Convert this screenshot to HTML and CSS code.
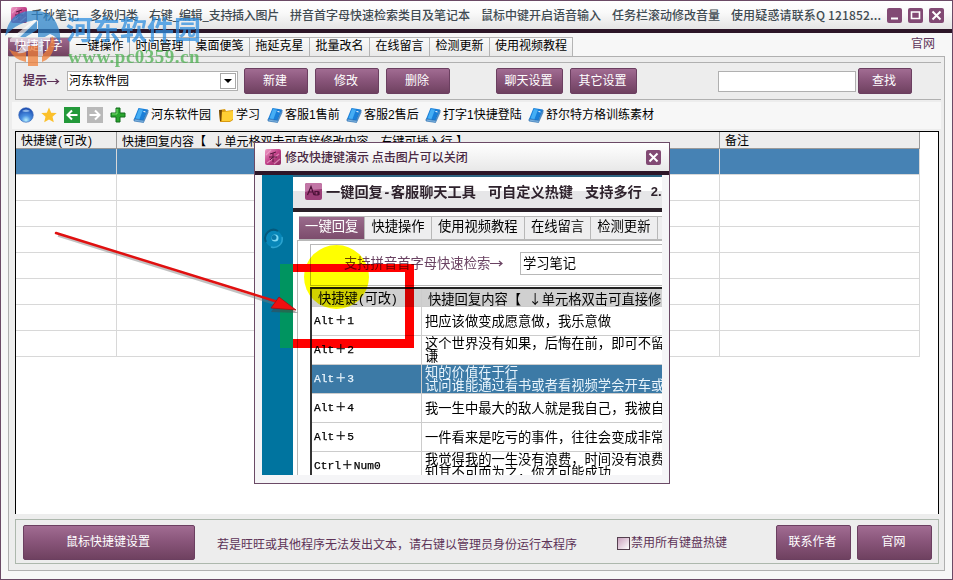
FILE: index.html
```
<!DOCTYPE html>
<html lang="zh-CN">
<head>
  <meta charset="UTF-8">
  <title>千秋笔记</title>
  <link rel="stylesheet" href="styles.css">
</head>
<body>
  <svg width="0" height="0" class="defs">
    <defs>
      <linearGradient id="pink" x1="0" y1="0" x2="1" y2="1">
        <stop offset="0" stop-color="#f0a0c8"/><stop offset=".5" stop-color="#c04088"/><stop offset="1" stop-color="#8c2860"/>
      </linearGradient>
      <radialGradient id="globe" cx=".5" cy=".85" r=".8">
        <stop offset="0" stop-color="#b8f0ff"/><stop offset=".4" stop-color="#4a90e0"/><stop offset="1" stop-color="#1c4bb0"/>
      </radialGradient>
      <symbol id="app" viewBox="0 0 16 16">
        <rect width="16" height="16" rx="2" fill="url(#pink)"/>
        <path d="M1 6L6 1M2 14L14 5M9 15L15 10" stroke="#f4b4d4" stroke-width="1.2" opacity=".6"/>
        <path d="M5 5l6-2M8 4v9M4 8h8M8 8l-3 3" stroke="#5a1840" fill="none"/>
      </symbol>
      <symbol id="book" viewBox="0 0 16 16">
        <path d="M5.500 1L15 2.500L10.500 13.500L1 12Z" fill="#1a7fd8"/>
        <path d="M6 2L10 2.700L6.500 12L2.500 11.500Z" fill="#45aef4"/>
        <path d="M1 12L10.500 13.500L15 3V5.500L10.500 15.500L1 14Z" fill="#7fb4e0" stroke="#1560a8" stroke-width=".6"/>
        <path d="M10.500 4.500l2 .4" stroke="#fff"/>
      </symbol>
    </defs>
  </svg>

  <div class="window">
    <div class="titlebar">
      <svg class="app-icon"><use href="#app"/></svg>
      <div class="title">
        <span>千秋笔记</span><span>多级归类</span><span class="tight">右键_编辑_支持插入图片</span><span>拼音首字母快速检索类目及笔记本</span><span>鼠标中键开启语音输入</span><span>任务栏滚动修改音量</span><span class="qq">使用疑惑请联系Q 121852...</span>
      </div>
      <div class="controls">
        <svg class="ctl" viewBox="0 0 15 15"><path d="M4 10.500h7" stroke="#fff" stroke-width="2"/></svg>
        <svg class="ctl" viewBox="0 0 15 15"><path d="M3.500 4h8v6.500h-8z" fill="none" stroke="#fff" stroke-width="1.600"/></svg>
        <svg class="ctl" viewBox="0 0 15 15"><path d="M3.500 3.500l8 8M11.500 3.500l-8 8" stroke="#fff" stroke-width="2"/></svg>
      </div>
    </div>

    <div class="tabs">
      <div class="tab active">快捷打字</div>
      <div class="tab">一键操作</div>
      <div class="tab">时间管理</div>
      <div class="tab">桌面便笺</div>
      <div class="tab">拖延克星</div>
      <div class="tab">批量改名</div>
      <div class="tab">在线留言</div>
      <div class="tab">检测更新</div>
      <div class="tab wide">使用视频教程</div>
      <a class="site">官网</a>
    </div>

    <div class="panel">
      <div class="group">
        <b class="hint">提示<svg width="13" height="9" viewBox="0 0 13 9"><path d="M0 4.500h11M8.500 2l3 2.500l-3 2.500" stroke="#5d3357" fill="none" stroke-width="1.200"/></svg></b>
        <div class="combo">河东软件园<span class="drop"></span></div>
        <button class="btn new">新建</button>
        <button class="btn edit">修改</button>
        <button class="btn del">删除</button>
        <button class="btn chat">聊天设置</button>
        <button class="btn other">其它设置</button>
        <input class="search" type="text">
        <button class="btn find">查找</button>
      </div>

      <div class="toolbar">
        <svg class="tool" viewBox="0 0 16 16"><circle cx="8" cy="8" r="7.300" fill="url(#globe)" stroke="#3567b8" stroke-width=".6"/><path d="M4 4q4-3 8 0q-4 2-8 0" fill="#b8d8f8" opacity=".7"/></svg>
        <svg class="tool" viewBox="0 0 16 16"><path d="M8 .5l2.200 5.200l5.500.4l-4.200 3.700l1.300 5.500L8 12.400l-4.800 2.900l1.300-5.500L.3 6.100l5.500-.4z" fill="#fbc02a"/></svg>
        <svg class="tool" viewBox="0 0 16 16"><rect width="16" height="16" fill="#23993a"/><path d="M13.500 8H4M8 3.500L3.500 8L8 12.500" fill="none" stroke="#fff" stroke-width="2"/></svg>
        <svg class="tool" viewBox="0 0 16 16"><rect width="16" height="16" fill="#b9b9b9"/><path d="M2.500 8H12M8 3.500L12.500 8L8 12.500" fill="none" stroke="#fff" stroke-width="2"/></svg>
        <svg class="tool" viewBox="0 0 16 16"><path d="M6 1h4v5h5v4h-5v5H6v-5H1V6h5z" fill="#2aa52e" stroke="#126c1c"/><path d="M7 2v5H2" stroke="#7be070" fill="none"/></svg>
        <div class="note n1"><svg><use href="#book"/></svg>河东软件园</div>
        <div class="note n2"><svg viewBox="0 0 16 16"><path d="M1 3l6-1l1 2l7-1v10l-3 2H2z" fill="#d99a12"/><path d="M4 5l11-1v8l-3 2H4z" fill="#ffcf34"/><path d="M1 3h3l-1 11H2z" fill="#70480c"/></svg>学习</div>
        <div class="note n3"><svg><use href="#book"/></svg>客服1售前</div>
        <div class="note n4"><svg><use href="#book"/></svg>客服2售后</div>
        <div class="note n5"><svg><use href="#book"/></svg>打字1快捷登陆</div>
        <div class="note"><svg><use href="#book"/></svg>舒尔特方格训练素材</div>
      </div>

      <div class="grid">
        <div class="row head"><div>快捷键<span class="paren">(</span>可改<span class="paren">)</span></div><div>快捷回复内容【<span class="down">↓</span>单元格双击可直接修改内容，右键可插入行 】</div><div>备注</div></div>
        <div class="row selected"><div></div><div></div><div></div></div>
        <div class="row"><div></div><div></div><div></div></div>
        <div class="row"><div></div><div></div><div></div></div>
        <div class="row"><div></div><div></div><div></div></div>
        <div class="row"><div></div><div></div><div></div></div>
        <div class="row"><div></div><div></div><div></div></div>
        <div class="row"><div></div><div></div><div></div></div>
        <div class="row"><div></div><div></div><div></div></div>
      </div>

      <div class="footer">
        <button class="btn mouse">鼠标快捷键设置</button>
        <span class="tip">若是旺旺或其他程序无法发出文本，请右键以管理员身份运行本程序</span>
        <label class="check"><span class="box"></span>禁用所有键盘热键</label>
        <button class="btn author">联系作者</button>
        <button class="btn home">官网</button>
      </div>
    </div>
  </div>

  <div class="dialog">
    <div class="dialog-title">
      <svg class="app-icon"><use href="#app"/></svg>
      <span>修改快捷键演示 点击图片可以关闭</span>
      <svg class="ctl" viewBox="0 0 15 15"><path d="M3.500 3.500l8 8M11.500 3.500l-8 8" stroke="#fff" stroke-width="2"/></svg>
    </div>
    <div class="demo">
      <div class="desk">
        <svg width="22" height="22" viewBox="0 0 22 22"><circle cx="11" cy="11" r="8.500" fill="#0786b8"/><path d="M3 14a8.500 8.500 0 0 1 12-11" fill="none" stroke="#05597c" stroke-width="2"/><path d="M19 9a8.500 8.500 0 0 1-11 10" fill="none" stroke="#2ca4d0" stroke-width="1.500"/><circle cx="12" cy="10" r="3.500" fill="#7cd8f4"/><circle cx="11" cy="9.500" r="2.500" fill="#0878a8"/></svg>
      </div>
      <div class="inner">
        <div class="inner-title">
          <svg width="17" height="17" viewBox="0 0 17 17"><rect width="17" height="17" rx="2" fill="#9c3f78"/><path d="M0 2q0-2 2-2h13q2 0 2 2v4q-9 0-17 3z" fill="#c276a6"/><path d="M2.500 12L6 3.500L9 12M4 9h4M10 8.500h3v3.500h-3zM14 8.500v3.500" stroke="#4c1238" fill="none" stroke-width="1.200"/></svg>
          <span class="a">一键回复<em>-</em>客服聊天工具</span><span>可自定义热键</span><span class="multi">支持多行</span><span class="ver">2.</span>
        </div>
        <div class="inner-tabs">
          <div class="active">一键回复</div><div>快捷操作</div><div class="long">使用视频教程</div><div>在线留言</div><div>检测更新</div><div></div>
        </div>
        <div class="inner-panel">
          <div class="inner-search"><span>支持拼音首字母快速检索<svg width="14" height="9" viewBox="0 0 14 9"><path d="M0 4.500h12M9 2l3 2.500l-3 2.500" stroke="#6a4262" fill="none" stroke-width="1.200"/></svg></span><div>学习笔记</div></div>
          <div class="inner-grid">
            <div class="irow ihead"><div><p>快捷键<span class="paren">(</span>可改<span class="paren">)</span></p></div><div><p>快捷回复内容【<span class="down">↓</span>单元格双击可直接修</p></div></div>
            <div class="irow"><div>Alt<i>＋</i>1</div><div>把应该做变成愿意做，我乐意做</div></div>
            <div class="irow"><div>Alt<i>＋</i>2</div><div>这个世界没有如果，后悔在前，即可不留<br>谦</div></div>
            <div class="irow on"><div>Alt<i>＋</i>3</div><div>知的价值在于行<br>试问谁能通过看书或者看视频学会开车或</div></div>
            <div class="irow"><div>Alt<i>＋</i>4</div><div>我一生中最大的敌人就是我自己，我被自</div></div>
            <div class="irow"><div>Alt<i>＋</i>5</div><div>一件看来是吃亏的事件，往往会变成非常</div></div>
            <div class="irow"><div>Ctrl<i>＋</i>Num0</div><div>我觉得我的一生没有浪费，时间没有浪费<br>知其不可而为之，你才可能成功</div></div>
          </div>
        </div>
      </div>
      <span class="spot"></span>
      <span class="frame-side"></span>
      <span class="frame"></span>
    </div>
  </div>

  <svg class="arrow" width="260" height="110" viewBox="0 0 260 110">
    <path d="M8 9.500L229 79" stroke="#777" stroke-width="2.500" opacity=".45"/>
    <path d="M248 87L221 86L228 76Z" fill="#444" opacity=".5"/>
    <path d="M6 7L228 76" stroke="#e01010" stroke-width="2.500" stroke-linecap="round"/>
    <path d="M246 84L221 82L229 71Z" fill="#f01010" stroke="#a01010" stroke-width=".8"/>
  </svg>

  <div class="watermark">
    <svg width="66" height="70" viewBox="0 0 66 70">
      <path d="M5 36Q9 12 30 11Q52 9 58 27Q61 33 60 44Q57 36 50 34L43 38V52H38V20Q18 21 5 36Z" fill="#2f86cc"/>
      <path d="M17 36L37 20V30L24 38Z" fill="#2f86cc"/>
      <path d="M9 49Q14 53 26 52V62Q14 60 9 49ZM28 46H38V66H28ZM42 55Q50 49 52 36Q56 41 54 48Q51 59 42 62Z" fill="#f0803a"/>
      <path d="M10 39L34 20H38L20 37H50V41H43V56H38V42H28V50Q24 54 17 53Q24 49 24 42H10Z" fill="#fff" opacity=".85"/>
    </svg>
    <span class="wm-name">河东软件园</span>
    <span class="wm-url">www.pc0359.cn</span>
  </div>
</body>
</html>
```
FILE: styles.css
```
* {
  box-sizing: border-box;
}
body {
  margin: 0;
  width: 953px;
  height: 580px;
  overflow: hidden;
  position: relative;
  font: 12px/16px "Liberation Sans", "Noto Sans CJK SC", sans-serif;
  color: #000;
}
p {
  margin: 0;
}
.defs {
  position: absolute;
}
svg {
  display: block;
  flex: none;
}
.window {
  display: flex;
  flex-direction: column;
  height: 580px;
  border: 1px solid #6b4a66;
  background: #f7f7f7;
}
.titlebar {
  display: flex;
  align-items: center;
  height: 32px;
  padding: 0 8px 0 10px;
  border-bottom: 4px solid #2d1628;
  background: linear-gradient(#fff, #fafafa 40%, #e4e4e4);
}
.app-icon {
  width: 16px;
  height: 16px;
}
.title {
  display: flex;
  gap: 11px;
  margin-left: 4px;
  width: 856px;
  white-space: nowrap;
  font-family: "Noto Sans CJK SC", sans-serif;
  font-weight: 500;
  color: #414b52;
}
.tight {
  letter-spacing: -.3px;
}
.qq {
  letter-spacing: .15px;
}
.controls {
  display: flex;
  gap: 6px;
}
.ctl {
  width: 15px;
  height: 15px;
  border-radius: 2px;
  background: #824a74;
}
.tabs {
  display: flex;
  height: 24px;
  padding: 4px 0 0 7px;
}
.tab {
  width: 60px;
  height: 19px;
  border: 1px solid #b4b4b4;
  border-left-width: 0;
  border-bottom: 0;
  background: linear-gradient(#fafafa, #e9e9e9);
  line-height: 17px;
  text-align: center;
}
.tab.active {
  width: 62px;
  background: linear-gradient(#a0698f, #71425f);
  color: #fff;
}
.tab.wide {
  width: 83px;
}
.site {
  margin: -1px 17px 0 auto;
  color: #5d3357;
}
.panel {
  width: 937px;
  height: 515px;
  margin: -1px 0 0 7px;
  padding: 5px 3px 0;
  border: 1px solid #b0b0b0;
  background: #ededed;
}
.group {
  display: flex;
  align-items: center;
  width: 926px;
  height: 38px;
  margin-left: 3px;
  padding-left: 7px;
  border: 1px solid #b0b0b0;
  border-right: 0;
}
.group .btn {
  margin-bottom: 1px;
}
.hint {
  display: flex;
  align-items: center;
  width: 44px;
  color: #5d3357;
}
.combo {
  display: flex;
  justify-content: space-between;
  align-items: center;
  width: 171px;
  height: 20px;
  padding: 0 1px;
  border: 1px solid #b0b0b0;
  background: #fff;
}
.drop {
  display: flex;
  align-items: center;
  justify-content: center;
  width: 16px;
  height: 16px;
  border: 1px solid #a8a8a8;
}
.drop::after {
  content: "";
  border: 4px solid transparent;
  border-top-color: #000;
  border-bottom: 0;
}
.btn {
  width: 64px;
  height: 26px;
  padding: 0 2px 0 0;
  border: 1px solid #6b3f60;
  border-radius: 2px;
  background: linear-gradient(#a16c92, #8a567b 45%, #6f4160);
  color: #fff;
  font: inherit;
}
.new { margin-left: 6px; }
.edit, .del { margin-left: 7px; }
.chat { width: 67px; margin-left: 46px; }
.other { width: 67px; margin-left: 7px; }
.find { width: 54px; margin-left: 2px; }
.search {
  width: 138px;
  height: 21px;
  margin-left: 81px;
  border: 1px solid #b0b0b0;
}
.toolbar {
  display: flex;
  align-items: center;
  width: 929px;
  height: 27px;
  margin-top: 2px;
  padding: 0 0 2px 6px;
  background: #f7f7f7;
}
.tool {
  width: 16px;
  height: 16px;
  margin-right: 7px;
}
.note {
  display: flex;
  align-items: center;
  white-space: nowrap;
}
.note svg {
  width: 16px;
  height: 16px;
  margin-right: 2px;
}
.n1 { width: 85px; }
.n2 { width: 49px; }
.n3 { width: 79px; }
.n4 { width: 79px; }
.n5 { width: 103px; }
.grid {
  width: 924px;
  height: 383px;
  margin: 2px 0 0 3px;
  border: 1px solid #000;
  border-bottom: 0;
  background: #fff;
}
.row {
  display: grid;
  grid-template-columns: 101px 603px 200px;
  width: 904px;
  height: 26px;
}
.row div {
  overflow: hidden;
  white-space: nowrap;
  border: solid #d8d8d8;
  border-width: 0 1px 1px 0;
}
.row.selected div {
  background: #4682b4;
}
.head {
  height: 17px;
  background: #ededed;
}
.head div {
  padding-left: 5px;
  border-color: #999;
  line-height: 18px;
}
.paren {
  display: inline-block;
  width: .5em;
  text-align: center;
}
.down {
  display: inline-block;
  width: 1.55em;
  text-align: right;
  font-family: "Noto Sans CJK SC", sans-serif;
}
.footer {
  display: flex;
  align-items: center;
  width: 924px;
  height: 45px;
  margin: 5px 0 0 3px;
  padding: 1px 0 0 7px;
  border: 1px solid #adb8ad;
  color: #5d3357;
}
.footer .btn {
  height: 35px;
}
.footer .mouse { width: 172px; }
.footer .author { width: 75px; }
.footer .home { width: 75px; margin-left: 6px; }
.tip {
  width: 400px;
  margin: 5px 0 0 22px;
}
.check {
  display: flex;
  align-items: center;
  gap: 1px;
  width: 159px;
  padding-top: 2px;
}
.box {
  width: 13px;
  height: 13px;
  border: 1px solid #54404f;
  background: linear-gradient(135deg, #c9a0bd, #fff);
}

/* popup with the shortcut demo */
.dialog {
  position: absolute;
  left: 254px;
  top: 142px;
  width: 416px;
  height: 342px;
  border: 1px solid #6b4a66;
  background: #f5f5f7;
}
.dialog-title {
  display: flex;
  align-items: center;
  height: 32px;
  padding: 0 8px 0 10px;
  border-bottom: 4px solid #2d1628;
  background: linear-gradient(#fff, #e8e8e8);
  font-family: "Noto Sans CJK SC", sans-serif;
  font-weight: 500;
  color: #4a2843;
}
.dialog-title span {
  margin-left: 4px;
}
.dialog-title .ctl {
  margin-left: auto;
}
.demo {
  position: relative;
  isolation: isolate;
  display: flex;
  width: 400px;
  height: 300px;
  margin-left: 7px;
  overflow: hidden;
  font-size: 13.3px;
  white-space: nowrap;
}
.desk {
  flex: none;
  width: 31px;
  padding: 53px 0 0 1px;
  background: #00749f;
}
.inner {
  flex: none;
  width: 369px;
  overflow: hidden;
  background: #fff;
}
.inner-title {
  display: flex;
  align-items: center;
  height: 37px;
  padding: 0 0 2px 12px;
  border-top: 2px solid #2e6684;
  border-bottom: 4px solid #2a2028;
  background: linear-gradient(#fff 45%, #e6e6e8 46%);
  font-size: 14.2px;
  font-weight: bold;
  color: #2e222c;
}
.inner-title span {
  margin-right: 12px;
}
.inner-title .a {
  margin-left: 4px;
}
.inner-title .multi {
  margin-right: 9px;
}
.inner-title .ver {
  margin-right: 0;
  font-size: 13px;
}
.inner-title em {
  display: inline-block;
  width: 8px;
  text-align: center;
}
.inner-tabs {
  display: flex;
  height: 28px;
  padding: 4px 0 0 6px;
}
.inner-tabs div {
  flex: none;
  width: 66.4px;
  border: 1px solid #b8b8b8;
  border-left: 0;
  background: #eeeeef;
  line-height: 20px;
  text-align: center;
}
.inner-tabs .long {
  width: 93px;
}
.inner-tabs .active {
  background: linear-gradient(#9a6b8c, #7c4c6c);
  color: #fff;
}
.inner-panel {
  height: 240px;
  margin-left: 4px;
  padding: 3px 0 0 12px;
  border: 1px solid #b8b8b8;
  border-right: 0;
}
.inner-search {
  display: flex;
  align-items: center;
  width: 370px;
  height: 42px;
  padding-bottom: 3px;
  border: 1px solid #b8b8b8;
}
.inner-search span {
  display: flex;
  align-items: center;
  width: 210px;
  padding-left: 33px;
  color: #6a4262;
}
.inner-search div {
  width: 160px;
  height: 23px;
  padding-left: 2px;
  border: 1px solid #b8b8b8;
  line-height: 21px;
}
.inner-grid {
  width: 370px;
  margin-top: 1px;
  border-top: 2px solid #222;
  border-left: 2px solid #333;
}
.irow {
  display: grid;
  grid-template-columns: 110px 258px;
  align-items: stretch;
  height: 29px;
  border-bottom: 1px solid #ccc;
}
.irow div {
  display: flex;
  flex-direction: column;
  justify-content: center;
  padding: 0 0 0 3px;
  line-height: 13px;
}
.irow div:first-child {
  flex-direction: row;
  justify-content: flex-start;
  align-items: center;
  border-right: 1px solid #ccc;
}
.irow:not(.ihead) div:first-child {
  padding-left: 2px;
  font-family: "Liberation Mono", "Noto Sans CJK SC", monospace;
  font-size: 11.2px;
  -webkit-text-stroke: .25px;
}
.irow i {
  width: 13px;
  font-style: normal;
  font-size: 11px;
  text-align: center;
}
.irow.ihead {
  height: 18px;
  background: #d0d0d0;
}
.irow.ihead div {
  padding: 2px 0 0 6px;
}
.irow.on {
  background: #3c7aa6;
  color: #e8f4fc;
}
.spot {
  position: absolute;
  left: 42px;
  top: 70px;
  width: 65px;
  height: 64px;
  border-radius: 50%;
  background: #ff0;
  mix-blend-mode: multiply;
}
.frame {
  position: absolute;
  left: 31px;
  top: 89px;
  width: 121px;
  height: 84px;
  border: solid #f00;
  border-width: 8px 9px 9px 0;
  mix-blend-mode: multiply;
}
.frame-side {
  position: absolute;
  left: 18px;
  top: 89px;
  width: 13px;
  height: 84px;
  background: #009460;
}
.arrow {
  position: absolute;
  left: 50px;
  top: 226px;
}
.watermark {
  position: absolute;
  left: 0;
  top: 0;
  opacity: .75;
}
.wm-name {
  position: absolute;
  left: 66px;
  top: 9px;
  font: bold 27px/40px "Noto Sans CJK SC", sans-serif;
  color: #2f8fe0;
  white-space: nowrap;
}
.wm-url {
  position: absolute;
  left: 68px;
  top: 46px;
  font: bold 19px/22px "Liberation Serif", serif;
  letter-spacing: .5px;
  color: #4cb050;
}
```
